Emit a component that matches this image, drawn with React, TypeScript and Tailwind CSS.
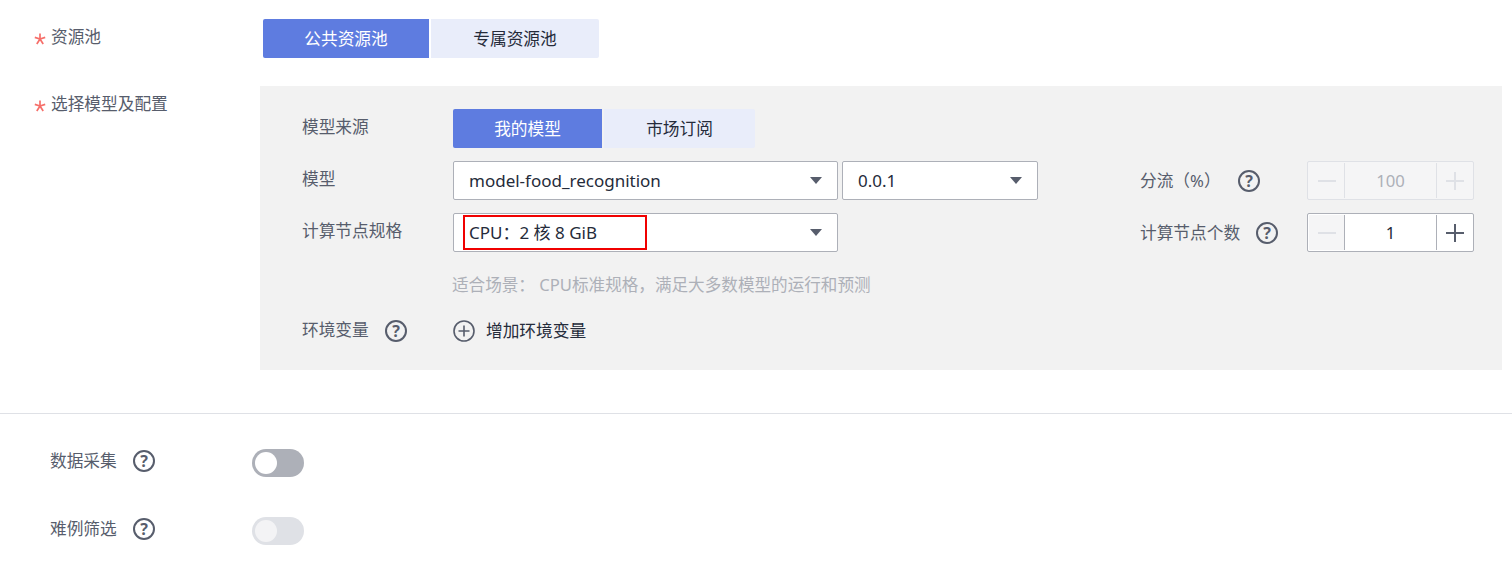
const labelText = "text-[#575d6c]";

function Help() {
  return (
    <span className="flex h-[22px] w-[22px] shrink-0 items-center justify-center rounded-full border-2 border-[#575d6c] text-[16px] leading-none font-bold text-[#575d6c]">
      ?
    </span>
  );
}

function Caret() {
  return (
    <svg width="12" height="7" viewBox="0 0 12 7" className="shrink-0">
      <path d="M0 0h12L6 7z" fill="#575d6c" />
    </svg>
  );
}

function Select({ value, width }: { value: string; width: string }) {
  return (
    <div className={`flex h-[39px] items-center justify-between rounded-[2px] border border-[#adb0b8] bg-white pr-[15px] pl-[15px] text-[#252b3a] ${width}`}>
      <span className="text-[17px]">{value}</span>
      <Caret />
    </div>
  );
}

function Tabs({ items, widths }: { items: string[]; widths: string[] }) {
  return (
    <div className="flex gap-[2px]">
      {items.map((item, i) => (
        <div
          key={item}
          className={`flex h-[39px] items-center justify-center ${widths[i]} ${
            i === 0 ? "rounded-l-[2px] bg-[#5e7ce0] text-white" : "rounded-r-[2px] bg-[#e9edfa] text-[#252b3a]"
          }`}
        >
          {item}
        </div>
      ))}
    </div>
  );
}

function Stepper({ value, disabled }: { value: string; disabled?: boolean }) {
  return (
    <div
      className={`flex h-[39px] w-[167px] rounded-[2px] border p-px ${
        disabled ? "border-[#dfe1e6] bg-[#f5f5f6]" : "border-[#adb0b8] bg-white"
      }`}
    >
      <div className={`flex w-[36px] items-center justify-center border-r ${disabled ? "border-[#dfe1e6]" : "border-[#adb0b8] bg-[#f5f5f6]"}`}>
        <svg width="18" height="18" viewBox="0 0 18 18">
          <path d="M0 9h18" stroke="#dfe1e6" strokeWidth="2" />
        </svg>
      </div>
      <div className={`flex flex-1 items-center justify-center ${disabled ? "text-[#adb0b8]" : "text-[#252b3a]"}`}>{value}</div>
      <div className={`flex w-[36px] items-center justify-center border-l ${disabled ? "border-[#dfe1e6]" : "border-[#adb0b8]"}`}>
        <svg width="18" height="18" viewBox="0 0 18 18">
          <path d="M0 9h18M9 0v18" stroke={disabled ? "#dfe1e6" : "#575d6c"} strokeWidth="2" />
        </svg>
      </div>
    </div>
  );
}

function Toggle({ disabled }: { disabled?: boolean }) {
  return (
    <div className={`flex h-[28px] w-[52px] items-center rounded-full pl-[3px] ${disabled ? "bg-[#dfe1e6]" : "bg-[#adb0b8]"}`}>
      <div className={`h-[22px] w-[22px] rounded-full ${disabled ? "bg-[#f3f3f5]" : "bg-white"}`} />
    </div>
  );
}

function Required({ text }: { text: string }) {
  return (
    <div className={`flex w-[260px] shrink-0 pt-[6px] pl-[34px] ${labelText}`}>
      <svg width="12" height="12" viewBox="0 0 12 12" className="mt-[8px] mr-[5px] shrink-0">
        <path d="M6 0.5V6M6 6L0.8 4.4M6 6L11.2 4.4M6 6L2.8 11M6 6L9.2 11" fill="none" stroke="#f66f6a" strokeWidth="1.7" />
      </svg>
      <span>{text}</span>
    </div>
  );
}

export default function App() {
  return (
    <div className="h-[565px] w-[1512px] overflow-hidden bg-white pt-[19px] font-['Noto_Sans','Noto_Sans_CJK_SC',sans-serif] text-[16.7px] leading-[24px]">
      <div className="flex">
        <Required text="资源池" />
        <div className="ml-[3px]">
          <Tabs items={["公共资源池", "专属资源池"]} widths={["w-[166px]", "w-[168px]"]} />
        </div>
      </div>

      <div className="mt-[28px] flex">
        <Required text="选择模型及配置" />
        <div className="h-[284px] w-[1242px] bg-[#f2f2f2] pt-[23px] pr-[28px] pl-[42px]">
          <div className="flex items-center">
            <div className={`w-[151px] pb-[4px] ${labelText}`}>模型来源</div>
            <Tabs items={["我的模型", "市场订阅"]} widths={["w-[149px]", "w-[151px]"]} />
          </div>

          <div className="mt-[13px] flex items-center">
            <div className={`w-[151px] pb-[4px] ${labelText}`}>模型</div>
            <Select value="model-food_recognition" width="w-[385px]" />
            <div className="ml-[4px]">
              <Select value="0.0.1" width="w-[196px]" />
            </div>
            <div className={`ml-auto flex w-[334px] items-center ${labelText}`}>
              <span className="w-[98px]">分流（%）</span>
              <Help />
              <div className="ml-auto">
                <Stepper value="100" disabled />
              </div>
            </div>
          </div>

          <div className="mt-[13px] flex items-center">
            <div className={`w-[151px] pb-[4px] ${labelText}`}>计算节点规格</div>
            <div className="relative">
              <Select value="CPU：2 核 8 GiB" width="w-[385px]" />
              <div className="absolute top-[2px] left-[10px] h-[35px] w-[184px] border-2 border-[#f00000]" />
            </div>
            <div className={`ml-auto flex w-[334px] items-center ${labelText}`}>
              <span className="w-[116px]">计算节点个数</span>
              <Help />
              <div className="ml-auto">
                <Stepper value="1" />
              </div>
            </div>
          </div>

          <div className="mt-[21px] ml-[150px] text-[16.6px] text-[#adb0b8]">适合场景： CPU标准规格，满足大多数模型的运行和预测</div>

          <div className="mt-[21px] flex items-center">
            <div className={`flex w-[151px] items-center ${labelText}`}>
              <span className="w-[83px] pb-[2px]">环境变量</span>
              <Help />
            </div>
            <svg width="22" height="22" viewBox="0 0 22 22" className="shrink-0">
              <circle cx="11" cy="11" r="10" fill="none" stroke="#575d6c" strokeWidth="1.6" />
              <path d="M5.5 11h11M11 5.5v11" stroke="#575d6c" strokeWidth="1.6" />
            </svg>
            <span className="ml-[11px] text-[#252b3a]">增加环境变量</span>
          </div>
        </div>
      </div>

      <div className="mt-[43px] border-t border-[#dfe1e6]" />

      <div className="mt-[35px] flex items-center">
        <div className={`flex w-[252px] items-center pb-[4px] pl-[50px] ${labelText}`}>
          <span className="w-[83px]">数据采集</span>
          <Help />
        </div>
        <Toggle />
      </div>
      <div className="mt-[40px] flex items-center">
        <div className={`flex w-[252px] items-center pb-[4px] pl-[50px] ${labelText}`}>
          <span className="w-[83px]">难例筛选</span>
          <Help />
        </div>
        <Toggle disabled />
      </div>
    </div>
  );
}
